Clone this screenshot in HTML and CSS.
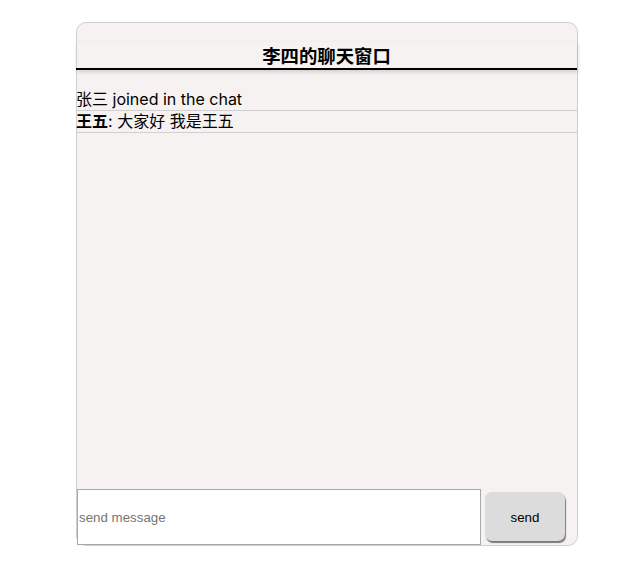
FILE: index.html
```html
<!DOCTYPE html>
<html>
<head>
<meta charset="utf-8">
<link rel="stylesheet" href="styles.css">
</head>
<body>
<div class="chat">
  <div class="header">李四的聊天窗口</div>
  <div class="messages">
    <div class="msg">张三 joined in the chat</div>
    <div class="msg"><b>王五</b>: 大家好 我是王五</div>
  </div>
  <div class="footer">
    <input class="input" type="text" placeholder="send message">
    <button class="send">send</button>
  </div>
</div>
</body>
</html>
```

FILE: styles.css
```css
html, body {
  margin: 0;
  padding: 0;
  background: #fff;
}
body {
  padding: 22px 0 0 76px;
  font-family: "Noto Sans CJK SC", "Noto Sans", sans-serif;
}
.chat {
  box-sizing: border-box;
  width: 502px;
  height: 524px;
  border: 1px solid #cfcfcf;
  border-radius: 10px;
  background: #f5f2f1;
  display: flex;
  flex-direction: column;
}
.header {
  margin-top: 19px;
  margin-left: -1px;
  height: 26px;
  line-height: 26px;
  text-align: center;
  font-size: 18.4px;
  font-weight: bold;
  color: #000;
  border-bottom: 2px solid #000;
  box-shadow: 1px 2px 4px rgba(0, 0, 0, 0.15);
}
.messages {
  flex: 1;
  padding-top: 19px;
}
.msg {
  font-family: Inter, "Noto Sans CJK SC", sans-serif;
  font-size: 16px;
  line-height: 21px;
  height: 21px;
  border-bottom: 1px solid #cfcfcf;
  color: #000;
  margin-left: -1px;
  white-space: nowrap;
}
.msg b {
  font-weight: bold;
}
.footer {
  display: flex;
  align-items: center;
  gap: 4px;
  height: 56px;
}
.input {
  box-sizing: border-box;
  width: 404px;
  height: 56px;
  margin: 0;
  border: 1px solid #a9a9a9;
  background: #fff;
  padding: 0 1px;
  font-family: "Liberation Sans", Arial, sans-serif;
  font-size: 13.33px;
  outline: none;
}
.input::placeholder {
  color: #757575;
}
.send {
  width: 80px;
  height: 49px;
  margin: 0 0 1px 0;
  padding: 2px 0 0 0;
  border: none;
  border-radius: 7px;
  background: #dcdcdc;
  box-shadow: 1px 2px 1px #7a7a7a;
  font-family: "Liberation Sans", Arial, sans-serif;
  font-size: 13.33px;
  color: #000;
}
```
